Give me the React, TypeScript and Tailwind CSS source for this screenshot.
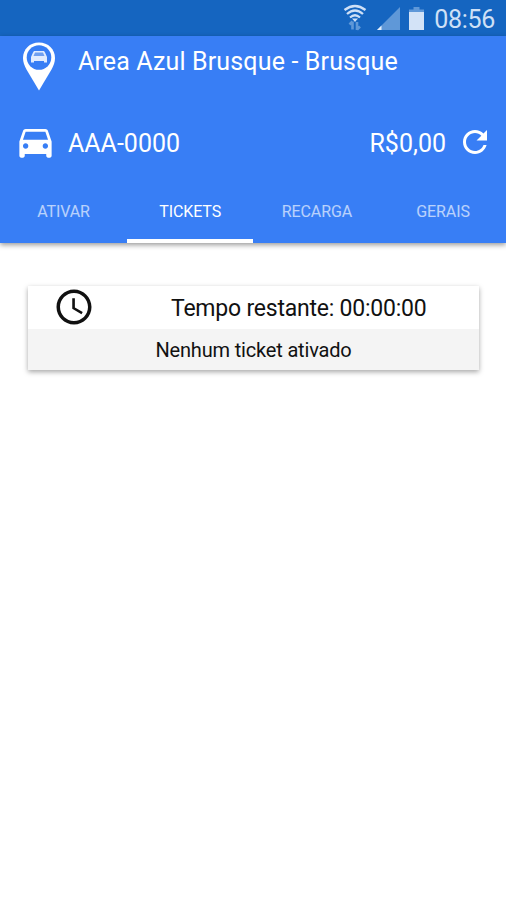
import clsx from "clsx";

const tabs = [
  { label: "ATIVAR", width: "w-[52px]" },
  { label: "TICKETS", width: "w-[61px]" },
  { label: "RECARGA", width: "w-[69px]" },
  { label: "GERAIS", width: "w-[53px]" },
];

function StatusBar() {
  return (
    <div className="flex h-9 items-center justify-end bg-[#1565c0] pr-[11px] text-[#cfe0f6]">
      <svg className="mr-[10px] h-[28px] w-[24px]" viewBox="0 0 24 28" fill="none" stroke="currentColor">
        <path d="M1.500 6Q12-2 22.500 6" strokeWidth="2.3" />
        <path d="M4 10Q12 3 20 10" strokeWidth="2.3" />
        <path d="M7 13.500Q12 9 17 13.500" strokeWidth="2.200" />
        <path d="M9 14.500h6l-3 3.500z" fill="currentColor" stroke="none" />
        <g stroke="#5f98d8" strokeWidth="2.600">
          <path d="M9.500 25.500v-8M6.500 20.500l3-3" />
          <path d="M14 18v8M17 22.500l-3 3" />
        </g>
      </svg>
      <svg className="mr-[9px] h-[23px] w-[23px]" viewBox="0 0 23 23">
        <path d="M23 0v23H0z" fill="#5f98d8" />
        <path d="M4.500 18.500V23H0z" fill="#e4effc" />
      </svg>
      <svg className="mr-[10px] h-[23px] w-[15px]" viewBox="0 0 15 23">
        <path d="M4.500 0h6v2.500H15V6H0V2.500h4.500z" fill="#5f98d8" />
        <path d="M0 5h15v18H0z" fill="#d3e3f7" />
      </svg>
      <span className="mt-[3px] text-[25px] leading-none tracking-[-0.3px]">08:56</span>
    </div>
  );
}

function PinLogo() {
  return (
    <svg className="h-[50px] w-[34px]" viewBox="0 0 34 50">
      <path d="M17 .5C7.800 .5 1 7.300 1 16c0 4 1.300 7.400 3.500 11.500L17 48.500l12.500-21C31.700 23.400 33 20 33 16 33 7.300 26.200 .5 17 .5z" fill="#fff" />
      <circle cx="17" cy="15.500" r="12.300" fill="#387ef5" />
      <path d="M11 10.500l1-1.500h10l1 1.500 2 4.500v5.500h-3V19H12v1.500H9V15z" fill="#e1ecfe" />
      <path d="M11.500 14l1.500-3.500h8l1.500 3.500z" fill="#6f9ff0" />
    </svg>
  );
}

function CarIcon() {
  return (
    <svg className="-mt-[2px] h-[43px] w-[43px]" viewBox="0 0 24 24" fill="currentColor">
      <path d="M18.920 6.010C18.720 5.420 18.160 5 17.500 5h-11c-.66 0-1.210.42-1.420 1.010L3 12v8c0 .55.45 1 1 1h1c.55 0 1-.45 1-1v-1h12v1c0 .55.45 1 1 1h1c.55 0 1-.45 1-1v-8l-2.080-5.990zM6.500 16c-.83 0-1.500-.67-1.500-1.500S5.670 13 6.500 13s1.500.67 1.500 1.500S7.330 16 6.500 16zm11 0c-.83 0-1.500-.67-1.500-1.500s.67-1.500 1.500-1.500 1.500.67 1.500 1.500-.67 1.500-1.500 1.500zM5 11l1.500-4.500h11L19 11H5z" />
    </svg>
  );
}

function RefreshIcon() {
  return (
    <svg className="-mt-[2px] h-9 w-9" viewBox="0 0 24 24" fill="currentColor">
      <path d="M17.650 6.350C16.200 4.900 14.210 4 12 4c-4.420 0-7.990 3.580-7.990 8s3.570 8 7.990 8c3.730 0 6.840-2.550 7.730-6h-2.080c-.82 2.330-3.040 4-5.650 4-3.310 0-6-2.690-6-6s2.690-6 6-6c1.660 0 3.140.69 4.220 1.780L13 11h7V4l-2.350 2.350z" />
    </svg>
  );
}

function ClockIcon() {
  return (
    <svg className="-mt-px h-[42px] w-[42px]" viewBox="0 0 24 24" fill="currentColor">
      <path d="M11.990 2C6.470 2 2 6.480 2 12s4.470 10 9.990 10C17.520 22 22 17.520 22 12S17.520 2 11.990 2zM12 20c-4.420 0-8-3.580-8-8s3.580-8 8-8 8 3.580 8 8-3.580 8-8 8z" />
      <path d="M12.500 7H11v6l5.250 3.150.75-1.230-4.500-2.670z" />
    </svg>
  );
}

export default function App() {
  const active = "TICKETS";

  return (
    <div className="h-[900px] w-full overflow-hidden bg-white font-['Roboto',sans-serif]">
      <StatusBar />

      <header className="h-[207px] bg-[#387ef5] text-white shadow-[0_2px_5px_rgba(0,0,0,0.4)]">
        <div className="flex h-[70px] pt-[6px] pl-[22px]">
          <PinLogo />
          <h1 className="ml-[22px] mt-[5px] whitespace-nowrap text-[25px] leading-[30px] tracking-[0.15px]">
            Area Azul Brusque - Brusque
          </h1>
        </div>

        <div className="flex h-[73px] items-center pl-[14px] pr-[13px]">
          <CarIcon />
          <span className="ml-[11px] mt-[2px] text-[25px] leading-[30px]">AAA-0000</span>
          <span className="ml-auto mr-[11px] mt-[2px] text-[25px] leading-[30px]">R$0,00</span>
          <RefreshIcon />
        </div>

        <nav className="grid h-16 grid-cols-4">
          {tabs.map((tab) => (
            <button
              key={tab.label}
              className={clsx(
                "flex items-center justify-center border-b-4 pt-[5px] text-[16px]",
                tab.label === active ? "border-white text-white" : "border-transparent text-white/65"
              )}
            >
              <span className={clsx("whitespace-nowrap tracking-[-0.1px]", tab.width)}>{tab.label}</span>
            </button>
          ))}
        </nav>
      </header>

      <main className="pt-[43px] pr-[27px] pl-7">
        <section className="h-[84px] bg-white text-[#111] shadow-[0_2px_5px_rgba(0,0,0,0.35)]">
          <div className="flex h-[43px] items-center pl-[25px]">
            <ClockIcon />
            <p className="mt-[3px] ml-[76px] whitespace-nowrap text-[23px] tracking-[-0.22px]">Tempo restante: 00:00:00</p>
          </div>
          <div className="flex h-[41px] items-center justify-center bg-[#f4f4f4]">
            <p className="text-[20px] tracking-[-0.17px]">Nenhum ticket ativado</p>
          </div>
        </section>
      </main>
    </div>
  );
}
